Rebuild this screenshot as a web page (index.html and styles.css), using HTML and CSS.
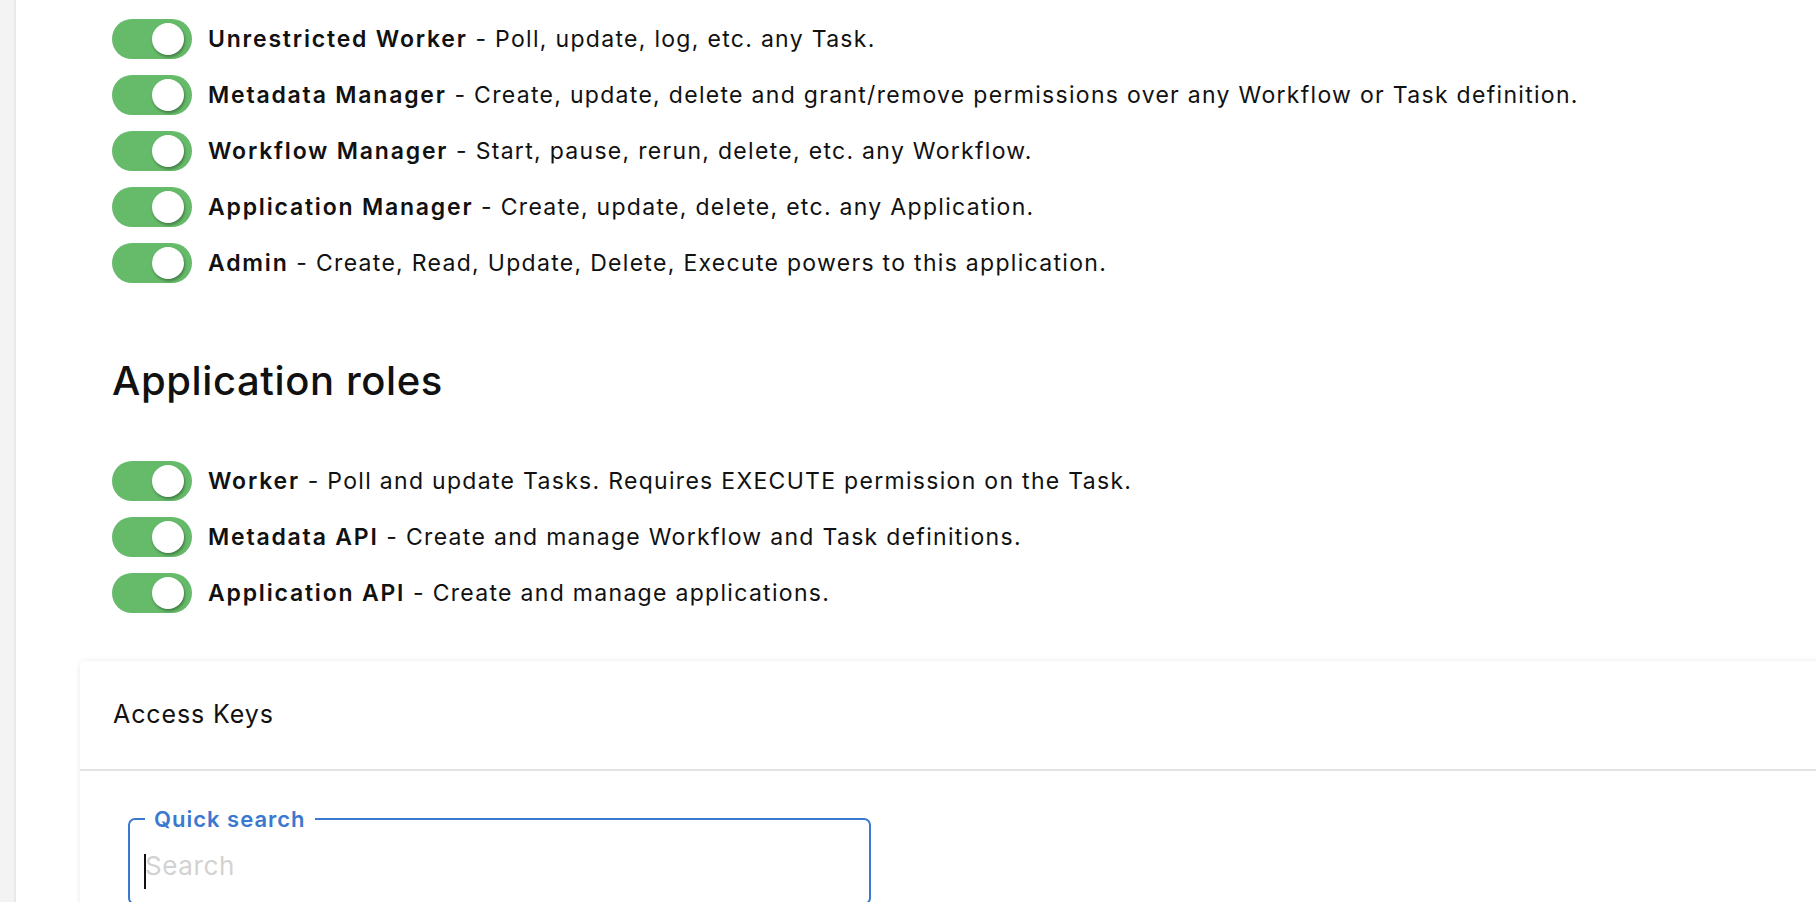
FILE: index.html
```html
<!DOCTYPE html>
<html lang="en">
<head>
<meta charset="utf-8">
<title>Application</title>
<link rel="stylesheet" href="styles.css">
</head>
<body>
<div class="layout">
  <aside class="rail"></aside>
  <main class="content">
    <ul class="roles roles-top">
      <li class="role"><span class="switch"><span class="thumb"></span></span><p class="role-text"><strong>Unrestricted Worker</strong> - Poll, update, log, etc. any Task.</p></li>
      <li class="role"><span class="switch"><span class="thumb"></span></span><p class="role-text"><strong>Metadata Manager</strong> - Create, update, delete and grant/remove permissions over any Workflow or Task definition.</p></li>
      <li class="role"><span class="switch"><span class="thumb"></span></span><p class="role-text"><strong>Workflow Manager</strong> - Start, pause, rerun, delete, etc. any Workflow.</p></li>
      <li class="role"><span class="switch"><span class="thumb"></span></span><p class="role-text"><strong>Application Manager</strong> - Create, update, delete, etc. any Application.</p></li>
      <li class="role"><span class="switch"><span class="thumb"></span></span><p class="role-text"><strong>Admin</strong> - Create, Read, Update, Delete, Execute powers to this application.</p></li>
    </ul>

    <h2 class="section-title">Application roles</h2>

    <ul class="roles roles-app">
      <li class="role"><span class="switch"><span class="thumb"></span></span><p class="role-text"><strong>Worker</strong> - Poll and update Tasks. Requires EXECUTE permission on the Task.</p></li>
      <li class="role"><span class="switch"><span class="thumb"></span></span><p class="role-text"><strong>Metadata API</strong> - Create and manage Workflow and Task definitions.</p></li>
      <li class="role"><span class="switch"><span class="thumb"></span></span><p class="role-text"><strong>Application API</strong> - Create and manage applications.</p></li>
    </ul>

    <section class="card">
      <header class="card-header">Access Keys</header>
      <div class="card-body">
        <fieldset class="search">
          <legend class="search-label">Quick search</legend>
          <input class="search-input" type="text" placeholder="Search" autofocus>
        </fieldset>
      </div>
    </section>
  </main>
</div>
</body>
</html>
```

FILE: styles.css
```css
* { box-sizing: border-box; }

html, body {
  margin: 0;
  padding: 0;
  height: 100%;
  overflow: hidden;
  background: #ffffff;
}

body {
  font-family: "Inter", "Noto Sans", sans-serif;
  color: #111111;
}

.layout {
  display: flex;
  min-height: 100%;
}

.rail {
  flex: 0 0 16px;
  background: #f3f3f3;
  border-right: 2px solid #e9e9e9;
}

.content {
  flex: 1;
  padding: 19px 0 0 96px;
  min-width: 0;
}

.roles {
  list-style: none;
  margin: 0;
  padding: 0;
  display: flex;
  flex-direction: column;
  gap: 16px;
}

.role {
  display: flex;
  align-items: center;
  gap: 16px;
  height: 40px;
}

.switch {
  flex: 0 0 80px;
  height: 40px;
  border-radius: 20px;
  background: #66bb6a;
  display: flex;
  align-items: center;
  justify-content: flex-end;
  padding-right: 8px;
}

.thumb {
  width: 32px;
  height: 32px;
  border-radius: 50%;
  background: #ffffff;
  box-shadow: 1px 2px 3px rgba(0, 0, 0, 0.35);
}

.role-text {
  margin: 0;
  font-size: 23px;
  letter-spacing: 1.3px;
  white-space: nowrap;
  color: #111111;
}

.role-text strong {
  font-weight: 600;
  letter-spacing: 1.8px;
}

.section-title {
  margin: 75px 0 57px;
  font-size: 40px;
  line-height: 46px;
  font-weight: 500;
  letter-spacing: 0.6px;
  color: #111111;
}

.card {
  margin: 48px -40px 0 -32px;
  background: #ffffff;
  border-radius: 6px 0 0 0;
  box-shadow: 0 0 6px rgba(0, 0, 0, 0.08), 0 1px 2px rgba(0, 0, 0, 0.04);
}

.card-header {
  height: 110px;
  display: flex;
  align-items: center;
  padding-left: 33px;
  padding-bottom: 2px;
  font-size: 25px;
  letter-spacing: 0.9px;
  color: #111111;
  border-bottom: 2px solid #e3e3e3;
}

.card-body {
  padding: 35px 0 40px 48px;
}

.search {
  position: relative;
  width: 743px;
  margin: 0;
  padding: 0 15px 16px;
  border: 2px solid #3b78cf;
  border-radius: 7px;
}

.search::before {
  content: "";
  position: absolute;
  left: 14px;
  top: 22px;
  width: 2px;
  height: 35px;
  background: #111111;
}

.search-label {
  padding: 0 9px;
  margin-left: 0;
  font-size: 22px;
  font-weight: 600;
  letter-spacing: 1px;
  color: #3b78cf;
}

.search-input {
  display: block;
  width: 100%;
  border: none;
  outline: none;
  padding: 18px 0 6px;
  font-family: "Inter", "Noto Sans", sans-serif;
  font-size: 26px;
  letter-spacing: 0.6px;
  color: #111111;
  caret-color: transparent;
  background: transparent;
}

.search-input::placeholder {
  color: #d2d2d2;
}
```
